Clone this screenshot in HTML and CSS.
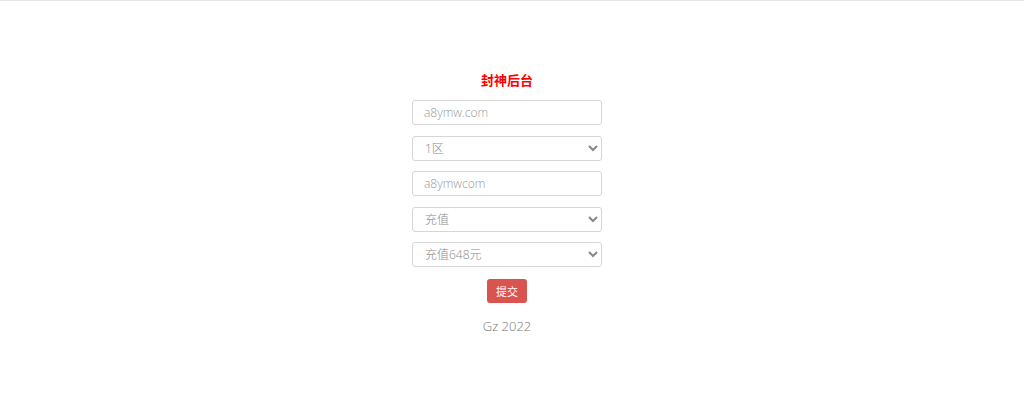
FILE: index.html
```html
<!DOCTYPE html>
<html lang="zh-CN">
<head>
  <meta charset="UTF-8" />
  <meta name="viewport" content="width=device-width, initial-scale=1.0" />
  <title>封神后台</title>
  <link rel="stylesheet" href="styles.css">
</head>
<body>
  <div class="page">
    <form class="panel">
      <h3 class="title">封神后台</h3>
      <input type="text" class="form-control" placeholder="a8ymw.com" />
      <select class="form-control">
        <option>1区</option>
        <option>2区</option>
      </select>
      <input type="text" class="form-control" placeholder="a8ymwcom" />
      <select class="form-control">
        <option>充值</option>
      </select>
      <select class="form-control">
        <option>充值648元</option>
      </select>
      <button type="submit" class="btn">提交</button>
      <p class="footer">Gz 2022</p>
    </form>
  </div>
</body>
</html>
```

FILE: styles.css
```css
*, *::before, *::after {
  box-sizing: border-box;
}
body {
  margin: 0;
  font-family: 'Open Sans', 'Noto Sans CJK SC', sans-serif;
  background-color: #fff;
  color: #555;
  border-top: 1px solid #e6e6e6;
}
.page {
  padding-right: 10px;
  display: flex;
  justify-content: center;
}
.panel {
  width: 190px;
  margin-top: 70px;
  display: flex;
  flex-direction: column;
  align-items: center;
}
.title {
  margin: 0 0 10px;
  height: 19px;
  line-height: 19px;
  font-size: 13px;
  font-weight: bold;
  color: #f00;
}
.form-control {
  width: 100%;
  height: 25px;
  margin-bottom: 10.5px;
  padding: 0 11px;
  font-family: inherit;
  font-size: 12px;
  font-weight: 300;
  color: #888;
  background-color: #fff;
  border: 1px solid #d6d6d6;
  border-radius: 3px;
}
.form-control::placeholder {
  color: #999;
}
select.form-control {
  padding-left: 8px;
}
.btn {
  margin-top: 1px;
  height: 24px;
  padding: 0 9px;
  font-family: inherit;
  font-size: 11px;
  color: #fff;
  background-color: #d9534f;
  border: none;
  border-radius: 3px;
  cursor: pointer;
}
.footer {
  margin: 14px 0 0;
  font-size: 13px;
  font-weight: 300;
  color: #777;
}
```
